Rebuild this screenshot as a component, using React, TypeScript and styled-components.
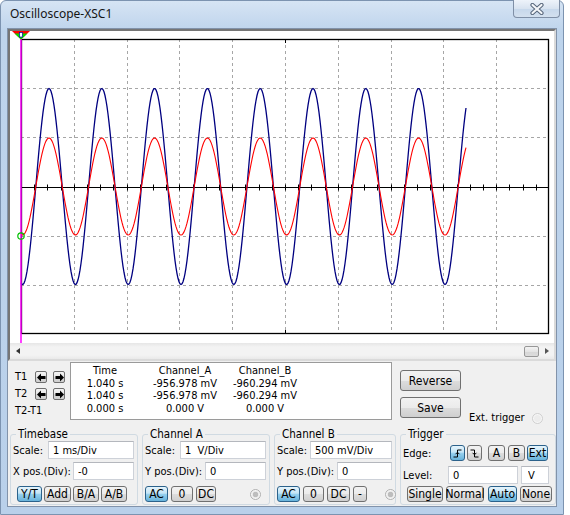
import React from 'react'
import styled, { createGlobalStyle } from 'styled-components'

const GlobalStyle = createGlobalStyle`
  body {
    margin: 0;
    background: #fff;
    font-family: "DejaVu Sans Condensed", "Liberation Sans", sans-serif;
    font-size: 11px;
    color: #000;
  }
`

const Window = styled.div`
  width: 564px;
  height: 515px;
  box-sizing: border-box;
  display: flex;
  flex-direction: column;
  padding: 0 6px 7px;
  border: 1px solid #7c93b0;
  border-radius: 6px 6px 0 0;
  background: linear-gradient(180deg, #d6e4f4 0px, #bed4ec 30px, #b9d0ea 100%);
`

const TitleBar = styled.div`
  height: 27px;
  display: flex;
  justify-content: space-between;
  align-items: flex-start;
`

const Title = styled.span`
  font-family: "Noto Sans", "Liberation Sans", sans-serif;
  font-size: 12px;
  line-height: 16px;
  margin: 5px 0 0 3px;
  color: #141414;
`

const CloseButton = styled.div`
  width: 47px;
  height: 18px;
  box-sizing: border-box;
  margin: -1px -3px 0 0;
  border: 1px solid #7f8fa6;
  border-top: none;
  border-radius: 0 0 4px 4px;
  background: linear-gradient(#eef3fa, #d8e3f0 50%, #c6d7eb 51%, #d3e0ef);
  display: flex;
  align-items: center;
  justify-content: center;
`

const Client = styled.div`
  flex: 1;
  display: flex;
  flex-direction: column;
  background: #f0f0f0;
  border: 1px solid #8293aa;
`

const PlotFrame = styled.div`
  border: 2px solid;
  border-color: #767676 #dadada #dadada #767676;
  background: #fff;
`

const ScreenSvg = styled.svg`
  display: block;
`

const ScrollBar = styled.div`
  height: 16px;
  display: flex;
  align-items: center;
  background: linear-gradient(#e6e6e6, #f3f3f3 4px, #f3f3f3 12px, #e9e9e9);
`

const ScrollArrow = styled.div<{ $dir: 'left' | 'right' }>`
  width: 15px;
  height: 16px;
  display: flex;
  align-items: center;
  justify-content: center;

  &::after {
    content: '';
    border-top: 3.5px solid transparent;
    border-bottom: 3.5px solid transparent;
    ${p => (p.$dir === 'left' ? 'border-right: 4px solid #333;' : 'border-left: 4px solid #555;')}
  }
`

const ScrollTrack = styled.div`
  flex: 1;
  display: flex;
  justify-content: flex-end;
  align-items: center;
`

const ScrollThumb = styled.div`
  width: 15px;
  height: 11px;
  box-sizing: border-box;
  border: 1px solid #979797;
  border-radius: 2px;
  background: linear-gradient(#f4f4f4, #e4e4e4 50%, #d6d6d6 51%, #dcdcdc);
`

const CursorRow = styled.div`
  height: 64px;
  display: flex;
  align-items: flex-start;
  padding-left: 7px;
`

const CursorNav = styled.div`
  width: 55px;
  padding-top: 10px;
  display: grid;
  grid-template-columns: 14px 12px 12px;
  grid-auto-rows: 12px;
  column-gap: 6px;
  row-gap: 5px;
`

const NavLabel = styled.span<{ $span?: boolean }>`
  line-height: 12px;
  white-space: nowrap;
  ${p => p.$span && 'grid-column: 1 / span 3;'}
`

const NavButton = styled.div`
  width: 12px;
  height: 12px;
  box-sizing: border-box;
  border: 1px solid #6f6f6f;
  border-radius: 2px;
  background: linear-gradient(#f4f4f4, #e6e6e6 50%, #d6d6d6 51%, #d0d0d0);
  display: flex;
  align-items: center;
  justify-content: center;
`

const Readout = styled.div`
  margin-top: 1px;
  width: 322px;
  height: 58px;
  box-sizing: border-box;
  border: 1px solid #9a9a9a;
  background: #fff;
  padding-top: 2px;
  display: grid;
  grid-template-columns: 68px 92px 68px;
  grid-auto-rows: 12.5px;
  line-height: 12.5px;
  text-align: center;
  white-space: nowrap;
`

const SideButtons = styled.div`
  margin-left: 8px;
  padding-top: 9px;
  display: flex;
  flex-direction: column;
  gap: 6px;
`

const PushButton = styled.div`
  width: 61px;
  height: 21px;
  box-sizing: border-box;
  border: 1px solid #707070;
  border-radius: 3px;
  background: linear-gradient(#f2f2f2, #ebebeb 50%, #dddddd 51%, #cfcfcf);
  display: flex;
  align-items: center;
  justify-content: center;
  font-size: 12px;
`

const ExtTrigger = styled.div`
  margin: 0 0 1px 8px;
  align-self: flex-end;
  display: flex;
  align-items: center;
  gap: 7px;
  line-height: 12px;
`

const Radio = styled.span<{ $ml?: number; $light?: boolean }>`
  flex: none;
  width: 11px;
  height: 11px;
  box-sizing: border-box;
  border-radius: 50%;
  margin-left: ${p => p.$ml ?? 0}px;
  border: 1px solid ${p => (p.$light ? '#cfcfcf' : '#b0b0b0')};
  background: ${p =>
    p.$light
      ? 'radial-gradient(circle, #ececec 0 3px, #f7f7f7 4px)'
      : 'radial-gradient(circle, #bdbdbd 0 2.5px, #e8e8e8 3px, #f6f6f6 4px)'};
`

const Groups = styled.div`
  height: 81px;
  box-sizing: border-box;
  display: flex;
  gap: 4px;
  padding: 3px 0 1px 2px;
`

const Group = styled.fieldset<{ $w: number }>`
  width: ${p => p.$w}px;
  box-sizing: border-box;
  min-width: 0;
  margin: 0;
  padding: 0 2px 1px;
  border: 1px solid #d0dae2;
  border-radius: 3px;
`

const Legend = styled.legend`
  padding: 0 2px;
  margin-left: 3px;
  line-height: 13px;
  font-size: 11.5px;
`

const FieldRow = styled.div<{ $h: number; $mt?: number }>`
  height: ${p => p.$h}px;
  margin-top: ${p => p.$mt ?? 0}px;
  display: flex;
  align-items: center;
`

const FieldLabel = styled.span<{ $w: number }>`
  flex: none;
  width: ${p => p.$w}px;
  white-space: nowrap;
`

const TextBox = styled.input<{ $w?: number; $indent?: number }>`
  ${p => (p.$w ? `width: ${p.$w}px; flex: none;` : 'flex: 1; min-width: 0;')}
  height: 18px;
  box-sizing: border-box;
  margin: 0 1px 0 0;
  padding: 0 0 0 ${p => p.$indent ?? 4}px;
  border: 1px solid #cdd1d8;
  border-top-color: #b4b7bd;
  background: #fff;
  font: inherit;
  color: #000;
  outline: none;
`

const ButtonRow = styled.div<{ $pl?: number; $gap?: number; $mt: number }>`
  height: 16px;
  margin-top: ${p => p.$mt}px;
  padding-left: ${p => p.$pl ?? 0}px;
  display: flex;
  align-items: center;
  gap: ${p => p.$gap ?? 3}px;
`

const ToggleButton = styled.div<{ $w: number; $active?: boolean; $ml?: number }>`
  flex: none;
  width: ${p => p.$w}px;
  height: 16px;
  margin-left: ${p => p.$ml ?? 0}px;
  box-sizing: border-box;
  border: 1px solid ${p => (p.$active ? '#2c628b' : '#707070')};
  border-radius: 3px;
  background: ${p =>
    p.$active
      ? 'linear-gradient(#e5f4fc, #c4e5f6 45%, #98d1ef 50%, #68b3db)'
      : 'linear-gradient(#f2f2f2, #ebebeb 50%, #dddddd 51%, #cfcfcf)'};
  display: flex;
  align-items: center;
  justify-content: center;
  line-height: 14px;
  font-size: 12px;
  white-space: nowrap;
`

// plot geometry, in page pixels
const PLOT = { x: 21, y: 39, w: 528, h: 295 }
const DIV_X = PLOT.w / 10
const DIV_Y = PLOT.h / 6
const MID_Y = PLOT.y + PLOT.h / 2
const TRACE_END = 466

const crisp = (v: number) => Math.round(v) + 0.5

function trace(amp: number) {
  const pts: string[] = []
  for (let x = PLOT.x; x <= TRACE_END; x += 1) {
    const y = MID_Y + amp * Math.cos((2 * Math.PI * (x - 22.6)) / DIV_X)
    pts.push(`${x},${y.toFixed(1)}`)
  }
  return pts.join(' ')
}

const Screen: React.FC = () => {
  const vLines = Array.from({ length: 9 }, (_, i) => crisp(PLOT.x + DIV_X * (i + 1)))
  const hLines = [1, 2, 4, 5].map(k => crisp(PLOT.y + DIV_Y * k))
  const ticks: number[] = []
  for (let t = PLOT.x + DIV_X / 4; t < PLOT.x + PLOT.w - 1; t += DIV_X / 4) ticks.push(crisp(t))
  const axisY = crisp(MID_Y)

  return (
    <ScreenSvg width={544} height={312} viewBox="10 31 544 312">
      {vLines.map(x => (
        <line key={'v' + x} x1={x} x2={x} y1={PLOT.y} y2={PLOT.y + PLOT.h} stroke="#a6a6a6" strokeDasharray="3 3" />
      ))}
      {hLines.map(y => (
        <line key={'h' + y} x1={PLOT.x} x2={PLOT.x + PLOT.w} y1={y} y2={y} stroke="#a6a6a6" strokeDasharray="3 3" />
      ))}
      <line x1={PLOT.x} x2={PLOT.x + PLOT.w} y1={axisY} y2={axisY} stroke="#000" />
      {ticks.map(x => (
        <line key={'t' + x} x1={x} x2={x} y1={axisY - 3} y2={axisY + 3} stroke="#000" />
      ))}
      <line x1={285.5} x2={285.5} y1={PLOT.y} y2={PLOT.y + 4} stroke="#000" />
      <line x1={285.5} x2={285.5} y1={PLOT.y + PLOT.h - 4} y2={PLOT.y + PLOT.h} stroke="#000" />
      <rect x={PLOT.x + 0.5} y={PLOT.y + 0.5} width={PLOT.w - 1} height={PLOT.h - 1} fill="none" stroke="#000" strokeWidth={1.3} />

      <polyline points={trace(98)} fill="none" stroke="#000080" strokeWidth={1.3} />
      <polyline points={trace(48.5)} fill="none" stroke="#ff0000" strokeWidth={1.1} />

      <line x1={21} x2={21} y1={31} y2={343} stroke="#ff00ff" strokeWidth={1.5} />
      <polygon points="12,31 30,31 21,39.5" fill="#ff0000" />
      <polygon points="14.5,33.5 27.5,33.5 21,39.5" fill="#00dd00" />
      <rect x={19.5} y={32.5} width={3} height={4.5} fill="#fff" stroke="#0000b0" strokeWidth={0.7} />
      <circle cx={21} cy={236} r={3.2} fill="none" stroke="#00c000" strokeWidth={1.2} />
    </ScreenSvg>
  )
}

const NavArrow: React.FC<{ dir: 'left' | 'right' }> = ({ dir }) => (
  <svg width="9" height="9" viewBox="0 0 9 9">
    <polygon
      points="0,4.5 4,0.5 4,3 8.5,3 8.5,6 4,6 4,8.5"
      fill="#000"
      transform={dir === 'right' ? 'translate(9 0) scale(-1 1)' : undefined}
    />
  </svg>
)

const EdgeIcon: React.FC<{ rising: boolean }> = ({ rising }) => (
  <svg width="11" height="11" viewBox="0 0 11 11">
    <path
      d={rising ? 'M1.5 9 H5.5 V2 H9.5' : 'M1.5 2 H5.5 V9 H9.5'}
      fill="none"
      stroke="#000"
      strokeWidth={1}
    />
    <path
      d={rising ? 'M3.6 6.2 L5.5 4.2 L7.4 6.2' : 'M3.6 4.8 L5.5 6.8 L7.4 4.8'}
      fill="none"
      stroke="#000"
      strokeWidth={1}
    />
  </svg>
)

const readout = [
  ['Time', 'Channel_A', 'Channel_B'],
  ['1.040 s', '-956.978 mV', '-960.294 mV'],
  ['1.040 s', '-956.978 mV', '-960.294 mV'],
  ['0.000 s', '0.000 V', '0.000 V'],
]

const App: React.FC = () => {
  return (
    <>
      <GlobalStyle />
      <Window>
        <TitleBar>
          <Title>Oscilloscope-XSC1</Title>
          <CloseButton>
            <svg width="14" height="12" viewBox="0 0 14 12">
              <path d="M2.5 2 L11.5 10 M11.5 2 L2.5 10" stroke="#56657a" strokeWidth={4.2} strokeLinecap="round" />
              <path d="M2.5 2 L11.5 10 M11.5 2 L2.5 10" stroke="#f4f6f9" strokeWidth={2.2} strokeLinecap="round" />
            </svg>
          </CloseButton>
        </TitleBar>

        <Client>
          <PlotFrame>
            <Screen />
            <ScrollBar>
              <ScrollArrow $dir="left" />
              <ScrollTrack>
                <ScrollThumb />
              </ScrollTrack>
              <ScrollArrow $dir="right" />
            </ScrollBar>
          </PlotFrame>

          <CursorRow>
            <CursorNav>
              <NavLabel>T1</NavLabel>
              <NavButton><NavArrow dir="left" /></NavButton>
              <NavButton><NavArrow dir="right" /></NavButton>
              <NavLabel>T2</NavLabel>
              <NavButton><NavArrow dir="left" /></NavButton>
              <NavButton><NavArrow dir="right" /></NavButton>
              <NavLabel $span>T2-T1</NavLabel>
            </CursorNav>

            <Readout>
              {readout.flat().map((cell, i) => (
                <span key={i}>{cell}</span>
              ))}
            </Readout>

            <SideButtons>
              <PushButton>Reverse</PushButton>
              <PushButton>Save</PushButton>
            </SideButtons>

            <ExtTrigger>
              <span>Ext. trigger</span>
              <Radio $light />
            </ExtTrigger>
          </CursorRow>

          <Groups>
            <Group $w={128}>
              <Legend>Timebase</Legend>
              <FieldRow $h={18}>
                <FieldLabel $w={35}>Scale:</FieldLabel>
                <TextBox readOnly value="1 ms/Div" />
              </FieldRow>
              <FieldRow $h={18} $mt={3}>
                <FieldLabel $w={60}>X pos.(Div):</FieldLabel>
                <TextBox readOnly value="-0" />
              </FieldRow>
              <ButtonRow $mt={6} $pl={4} $gap={2}>
                <ToggleButton $w={25} $active>Y/T</ToggleButton>
                <ToggleButton $w={27}>Add</ToggleButton>
                <ToggleButton $w={26}>B/A</ToggleButton>
                <ToggleButton $w={26}>A/B</ToggleButton>
              </ButtonRow>
            </Group>

            <Group $w={128}>
              <Legend>Channel A</Legend>
              <FieldRow $h={18}>
                <FieldLabel $w={35}>Scale:</FieldLabel>
                <TextBox readOnly value="1  V/Div" />
              </FieldRow>
              <FieldRow $h={18} $mt={3}>
                <FieldLabel $w={60}>Y pos.(Div):</FieldLabel>
                <TextBox readOnly value="0" />
              </FieldRow>
              <ButtonRow $mt={6}>
                <ToggleButton $w={23} $active>AC</ToggleButton>
                <ToggleButton $w={22}>0</ToggleButton>
                <ToggleButton $w={20}>DC</ToggleButton>
                <Radio $ml={31} />
              </ButtonRow>
            </Group>

            <Group $w={122}>
              <Legend>Channel B</Legend>
              <FieldRow $h={18}>
                <FieldLabel $w={33}>Scale:</FieldLabel>
                <TextBox readOnly value="500 mV/Div" />
              </FieldRow>
              <FieldRow $h={18} $mt={3}>
                <FieldLabel $w={60}>Y pos.(Div):</FieldLabel>
                <TextBox readOnly value="0" />
              </FieldRow>
              <ButtonRow $mt={6}>
                <ToggleButton $w={23} $active>AC</ToggleButton>
                <ToggleButton $w={21}>0</ToggleButton>
                <ToggleButton $w={23}>DC</ToggleButton>
                <ToggleButton $w={14}>-</ToggleButton>
                <Radio $ml={15} />
              </ButtonRow>
            </Group>

            <Group $w={156}>
              <Legend>Trigger</Legend>
              <FieldRow $h={16} $mt={4}>
                <FieldLabel $w={47}>Edge:</FieldLabel>
                <ToggleButton $w={15} $active><EdgeIcon rising /></ToggleButton>
                <ToggleButton $w={15} $ml={2}><EdgeIcon rising={false} /></ToggleButton>
                <ToggleButton $w={17} $ml={6}>A</ToggleButton>
                <ToggleButton $w={17} $ml={3}>B</ToggleButton>
                <ToggleButton $w={21} $ml={2} $active>Ext</ToggleButton>
              </FieldRow>
              <FieldRow $h={18} $mt={5}>
                <FieldLabel $w={45}>Level:</FieldLabel>
                <TextBox readOnly value="0" $w={70} />
                <TextBox readOnly value="V" $w={28} $indent={6} style={{ marginLeft: 2 }} />
              </FieldRow>
              <ButtonRow $mt={2} $pl={4}>
                <ToggleButton $w={36}>Single</ToggleButton>
                <ToggleButton $w={38}>Normal</ToggleButton>
                <ToggleButton $w={29} $ml={1} $active>Auto</ToggleButton>
                <ToggleButton $w={32}>None</ToggleButton>
              </ButtonRow>
            </Group>
          </Groups>
        </Client>
      </Window>
    </>
  )
}

export default App
